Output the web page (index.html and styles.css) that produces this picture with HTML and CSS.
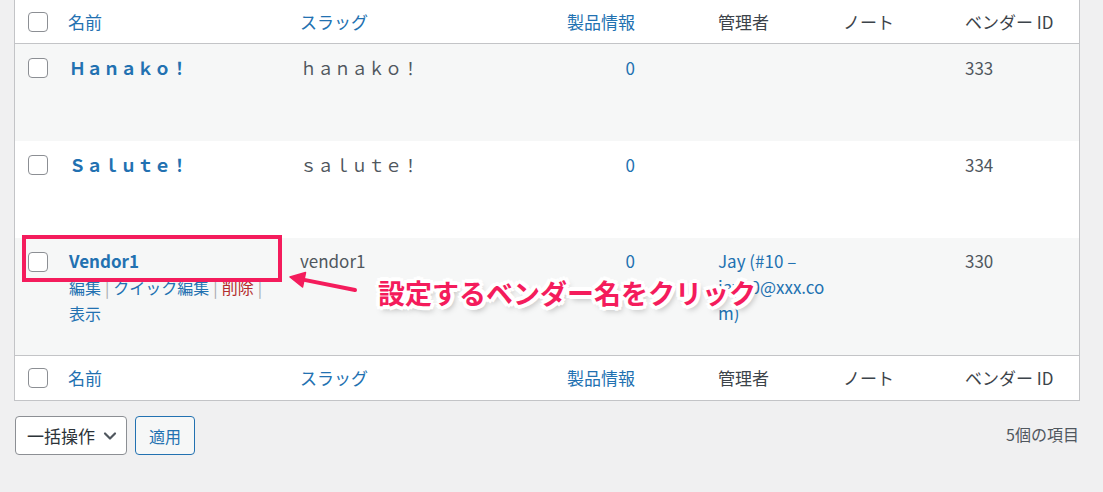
FILE: index.html
```html
<!DOCTYPE html>
<html lang="ja">
<head>
<meta charset="utf-8">
<title>ベンダー</title>
<link rel="stylesheet" href="styles.css">
</head>
<body>
<div class="page">
  <table class="list">
    <colgroup>
      <col class="c-cb"><col class="c-name"><col class="c-slug"><col class="c-prod"><col class="c-admin"><col class="c-note"><col class="c-id">
    </colgroup>
    <thead>
      <tr>
        <th class="cb"><span class="check"></span></th>
        <th class="link">名前</th>
        <th class="link">スラッグ</th>
        <th class="link num">製品情報</th>
        <th>管理者</th>
        <th>ノート</th>
        <th>ベンダー ID</th>
      </tr>
    </thead>
    <tbody>
      <tr class="alt r-short">
        <td class="cb"><span class="check"></span></td>
        <td class="name">Ｈａｎａｋｏ！</td>
        <td class="slug">ｈａｎａｋｏ！</td>
        <td class="num link">0</td>
        <td></td>
        <td></td>
        <td class="id">333</td>
      </tr>
      <tr class="r-short">
        <td class="cb"><span class="check"></span></td>
        <td class="name">Ｓａｌｕｔｅ！</td>
        <td class="slug">ｓａｌｕｔｅ！</td>
        <td class="num link">0</td>
        <td></td>
        <td></td>
        <td class="id">334</td>
      </tr>
      <tr class="alt r-tall">
        <td class="cb"><span class="check"></span></td>
        <td class="name">
          <span class="vname">Vendor1</span>
          <div class="actions"><span class="a">編集</span><span class="sep">|</span><span class="a">クイック編集</span><span class="sep">|</span><span class="del">削除</span><span class="sep">|</span> <span class="a">表示</span></div>
        </td>
        <td class="slug">vendor1</td>
        <td class="num link">0</td>
        <td class="admin link">Jay (#10 – jay10@xxx.com)</td>
        <td></td>
        <td class="id">330</td>
      </tr>
    </tbody>
    <tfoot>
      <tr>
        <th class="cb"><span class="check"></span></th>
        <th class="link">名前</th>
        <th class="link">スラッグ</th>
        <th class="link num">製品情報</th>
        <th>管理者</th>
        <th>ノート</th>
        <th>ベンダー ID</th>
      </tr>
    </tfoot>
  </table>

  <div class="tablenav">
    <div class="bulk">
      <div class="select">一括操作
        <svg width="14" height="10" viewBox="0 0 14 10"><path d="M2 2.5 L7 7.5 L12 2.5" fill="none" stroke="#50575e" stroke-width="2.2" stroke-linecap="round" stroke-linejoin="round"/></svg>
      </div>
      <div class="apply">適用</div>
    </div>
    <div class="count">5個の項目</div>
  </div>

  <div class="hl-box"></div>
  <svg class="arrow" width="80" height="30" viewBox="280 268 80 30">
    <line x1="355" y1="290" x2="298" y2="278.6" stroke="#f41c5c" stroke-width="4" stroke-linecap="round"/>
    <polygon points="290,277 305.5,272.5 302.5,287" fill="#f41c5c" stroke="#f41c5c" stroke-width="1.5" stroke-linejoin="round"/>
  </svg>
  <div class="callout">設定するベンダー名をクリック</div>
</div>
</body>
</html>
```

FILE: styles.css
```css
html, body {
  margin: 0;
  padding: 0;
  background: #f0f0f1;
}
body {
  font-family: "Noto Sans CJK JP", "Noto Sans", sans-serif;
  font-size: 17px;
  color: #3c434a;
  width: 1103px;
  height: 492px;
  overflow: hidden;
}
.page {
  position: relative;
  padding: 0 24px 0 14px;
  height: 492px;
}
.list {
  width: 1065px;
  table-layout: fixed;
  border-collapse: separate;
  border-spacing: 0;
  background: #fff;
  border: 1px solid #c3c4c7;
  border-top: 0;
}
.c-cb { width: 43px; }
.c-name { width: 232px; }
.c-slug { width: 250px; }
.c-prod { width: 168px; }
.c-admin { width: 125px; }
.c-note { width: 122px; }
.c-id { width: 124px; }

th {
  font-weight: normal;
  text-align: left;
  height: 43px;
  padding: 0 10px;
  line-height: 26px;
  vertical-align: middle;
  color: #3c434a;
}
thead th { border-bottom: 1px solid #c3c4c7; }
tfoot th { border-top: 1px solid #c3c4c7; height: 44px; }
th.cb, td.cb { padding: 0 0 0 13px; }
td.cb { padding-top: 14px; }
.link { color: #2271b1; }
.num { text-align: right; padding-right: 73px; }

td {
  vertical-align: top;
  padding: 11px 10px 0 10px;
  line-height: 26px;
}
tr.r-tall td { padding-top: 10px; }
tr.r-tall td.cb { padding-top: 14px; }
tr.alt td { background: #f6f7f7; }
tr.r-short { height: 97px; }
tr.r-tall { height: 117px; }

.check {
  display: block;
  width: 18px;
  height: 18px;
  border: 1px solid #8c8f94;
  border-radius: 4px;
  background: #fff;
}
.name {
  color: #2271b1;
  font-weight: bold;
  padding-left: 11px;
}
.vname { display: block; }
.actions {
  font-weight: normal;
  font-size: 16px;
  line-height: 26px;
  color: #2271b1;
  padding-right: 0;
}
.sep { color: #a7aaad; padding: 0 4px; }
.del { color: #b32d2e; }
.slug { color: #50575e; }
.id { color: #50575e; }
.admin {
  padding-right: 6px;
  overflow-wrap: anywhere;
}

.tablenav {
  display: flex;
  justify-content: space-between;
  align-items: center;
  width: 1065px;
  margin-top: 15px;
}
.bulk {
  display: flex;
  gap: 8px;
  padding-left: 1px;
}
.select {
  display: flex;
  align-items: center;
  gap: 8px;
  box-sizing: border-box;
  height: 39px;
  width: 112px;
  padding: 0 0 0 11px;
  border: 1px solid #8c8f94;
  border-radius: 4px;
  background: #fff;
  color: #2c3338;
  font-size: 17px;
}
.apply {
  display: flex;
  align-items: center;
  justify-content: center;
  box-sizing: border-box;
  height: 39px;
  width: 60px;
  border: 1px solid #2271b1;
  border-radius: 4px;
  background: #f6f7f7;
  color: #2271b1;
  font-size: 16px;
}
.count {
  font-size: 16px;
  color: #50575e;
  margin-top: -3px;
}

.hl-box {
  position: absolute;
  left: 22px;
  top: 235px;
  width: 252px;
  height: 39px;
  border: 4px solid #f41c5c;
}
.arrow {
  position: absolute;
  left: 280px;
  top: 268px;
}
.callout {
  position: absolute;
  left: 378px;
  top: 276px;
  font-size: 27px;
  line-height: 34px;
  font-weight: bold;
  color: #f41c5c;
  white-space: nowrap;
  text-shadow:
    2px 0 0 #fff, -2px 0 0 #fff, 0 2px 0 #fff, 0 -2px 0 #fff,
    2px 2px 0 #fff, -2px -2px 0 #fff, 2px -2px 0 #fff, -2px 2px 0 #fff,
    4px 0 0 #fff, -4px 0 0 #fff, 0 4px 0 #fff, 0 -4px 0 #fff,
    3px 3px 0 #fff, -3px -3px 0 #fff, 3px -3px 0 #fff, -3px 3px 0 #fff,
    3px 4px 6px rgba(0,0,0,0.35);
}
```
